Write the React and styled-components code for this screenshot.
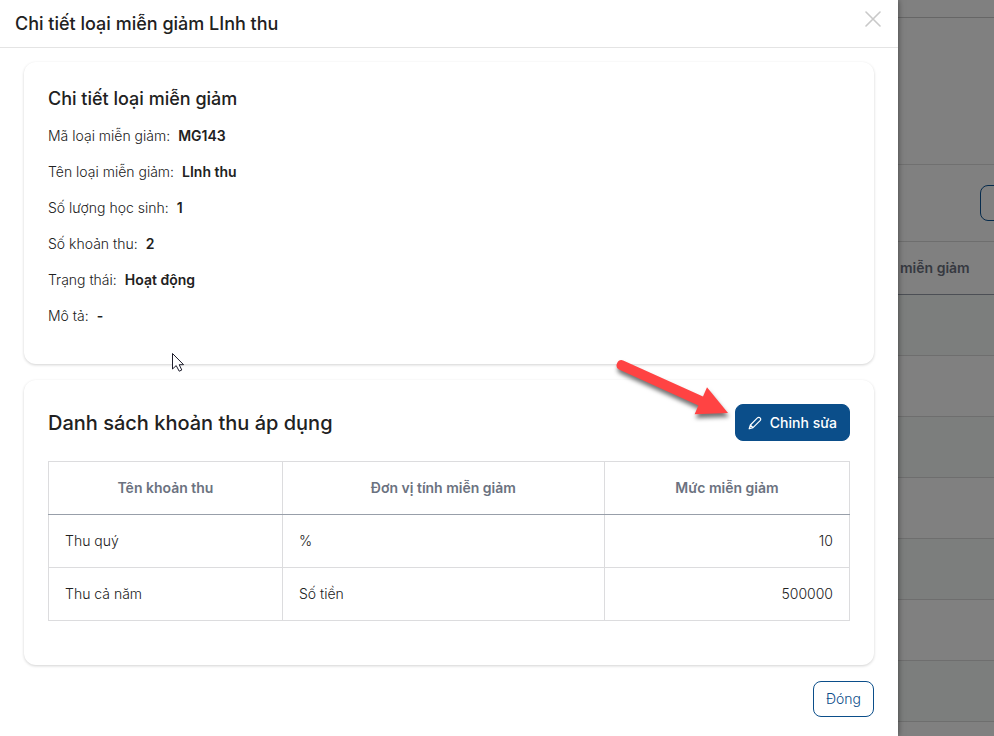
import React from "react";
import styled, { createGlobalStyle } from "styled-components";

const details = [
  { label: "Mã loại miễn giảm", value: "MG143" },
  { label: "Tên loại miễn giảm", value: "LInh thu" },
  { label: "Số lượng học sinh", value: "1" },
  { label: "Số khoản thu", value: "2" },
  { label: "Trạng thái", value: "Hoạt động" },
  { label: "Mô tả", value: "-" },
];

const fees = [
  { name: "Thu quý", unit: "%", amount: 10 },
  { name: "Thu cả năm", unit: "Số tiền", amount: 500000 },
];

const listRows = [1, 2, 3, 4, 5, 6, 7, 8];

function PencilIcon() {
  return (
    <svg width="14" height="14" viewBox="0 0 14 14" fill="none" aria-hidden="true">
      <path
        d="M1.2 12.8 2.4 9 9.4 1.9a1.8 1.8 0 0 1 2.7 0 1.8 1.8 0 0 1 0 2.7L5 11.6ZM2.4 9 5 11.6"
        stroke="currentColor"
        strokeWidth="1.2"
        strokeLinejoin="round"
      />
    </svg>
  );
}

function App() {
  return (
    <Layout>
      <GlobalStyle />
      <Drawer role="dialog" aria-labelledby="drawer-title">
        <DrawerHeader>
          <h1 id="drawer-title">Chi tiết loại miễn giảm LInh thu</h1>
          <CloseButton type="button" aria-label="Đóng cửa sổ">
            <svg width="16" height="16" viewBox="0 0 16 16">
              <path d="M1 1 15 15M15 1 1 15" stroke="currentColor" strokeWidth="1.6" strokeLinecap="round" />
            </svg>
          </CloseButton>
        </DrawerHeader>
        <DrawerBody>
          <Card $compact>
            <CardTitle>Chi tiết loại miễn giảm</CardTitle>
            <DetailList>
              {details.map((item) => (
                <DetailRow key={item.label}>
                  <dt>{item.label}:</dt>
                  <dd>{item.value}</dd>
                </DetailRow>
              ))}
            </DetailList>
            <Cursor width="14" height="21" viewBox="0 0 14 21" aria-hidden="true">
              <path
                d="M1.5 1.5V17L5.2 13.6 8.2 19.2 10.8 18 8.2 12.7H12.6Z"
                fill="#fff"
                stroke="#1d1d2b"
                strokeLinejoin="round"
              />
            </Cursor>
          </Card>
          <Card>
            <CardHeader>
              <CardTitle $large>Danh sách khoản thu áp dụng</CardTitle>
              <Button type="button" $primary>
                <PencilIcon />
                Chỉnh sửa
              </Button>
              <Arrow width="130" height="75" viewBox="0 0 130 75" aria-hidden="true">
                <path d="M13.2 8.4 93 44.5 97 35.2 118 61 84.6 62.2 88.4 53.6 9 17.6A5.1 5.1 0 0 1 13.2 8.4Z" />
              </Arrow>
            </CardHeader>
            <FeeTable>
              <colgroup>
                <col width="29.2%" />
                <col width="40.2%" />
                <col width="30.6%" />
              </colgroup>
              <thead>
                <tr>
                  <th>Tên khoản thu</th>
                  <th>Đơn vị tính miễn giảm</th>
                  <th>Mức miễn giảm</th>
                </tr>
              </thead>
              <tbody>
                {fees.map((fee) => (
                  <tr key={fee.name}>
                    <td>{fee.name}</td>
                    <td>{fee.unit}</td>
                    <td>{fee.amount}</td>
                  </tr>
                ))}
              </tbody>
            </FeeTable>
          </Card>
          <DrawerFooter>
            <Button type="button">Đóng</Button>
          </DrawerFooter>
        </DrawerBody>
      </Drawer>
      <Backdrop>
        <BackdropTop />
        <BackdropFilters />
        <BackdropToolbar>
          <BackdropButton type="button" aria-label="Thêm" />
        </BackdropToolbar>
        <BackdropHead>miễn giảm</BackdropHead>
        {listRows.map((row) => (
          <BackdropRow key={row} />
        ))}
      </Backdrop>
    </Layout>
  );
}

export default App;

const GlobalStyle = createGlobalStyle`
  * {
    box-sizing: border-box;
  }
  body {
    margin: 0;
    font-family: Inter, "Liberation Sans", sans-serif;
    font-size: 14px;
    line-height: 20px;
    font-weight: 300;
    color: #212121;
    background: #808080;
  }
  h1, h2, dl, dd {
    margin: 0;
  }
  button {
    font: inherit;
    cursor: pointer;
  }
`;

const Layout = styled.div`
  display: flex;
  height: 100vh;
  overflow: hidden;
`;

const Drawer = styled.section`
  flex: 1;
  min-width: 0;
  background: #fff;
  box-shadow: 0 0 6px rgba(0, 0, 0, 0.5);
  z-index: 1;
`;

const DrawerHeader = styled.header`
  display: flex;
  justify-content: space-between;
  height: 48px;
  padding: 0 17px 0 15px;
  border-bottom: 1px solid #e4e4e4;
  h1 {
    font-size: 18px;
    line-height: 47px;
    font-weight: 500;
  }
`;

const CloseButton = styled.button`
  display: flex;
  align-self: flex-start;
  margin-top: 11px;
  padding: 0;
  border: none;
  background: none;
  color: #c9c9c9;
`;

const DrawerBody = styled.div`
  display: flex;
  flex-direction: column;
  gap: 16px;
  padding: 14px 24px;
`;

const Card = styled.section`
  position: relative;
  padding: 24px 24px ${(props) => (props.$compact ? "38px" : "44px")};
  border-radius: 12px;
  background: #fff;
  box-shadow: 0 1px 3px rgba(0, 0, 0, 0.18);
`;

const CardTitle = styled.h2`
  font-size: ${(props) => (props.$large ? "20px" : "18px")};
  line-height: 26px;
  font-weight: 500;
`;

const DetailList = styled.dl`
  display: flex;
  flex-direction: column;
  gap: 16px;
  padding-top: 14px;
`;

const DetailRow = styled.div`
  display: flex;
  gap: 8px;
  dd {
    font-weight: 600;
  }
`;

const CardHeader = styled.div`
  position: relative;
  display: flex;
  align-items: center;
  justify-content: space-between;
  margin-bottom: 20px;
`;

const Button = styled.button`
  display: flex;
  align-items: center;
  gap: 8px;
  height: ${(props) => (props.$primary ? "37px" : "36px")};
  padding: 0 12px;
  border: 1px solid #0b4e8a;
  border-radius: 8px;
  background: ${(props) => (props.$primary ? "#0b4e8a" : "#fff")};
  color: ${(props) => (props.$primary ? "#fff" : "#0b4e8a")};
  font-weight: ${(props) => (props.$primary ? 500 : 300)};
`;

const Arrow = styled.svg`
  position: absolute;
  right: 110px;
  top: -52px;
  fill: #ff4343;
  filter: drop-shadow(1px 4px 2px rgba(0, 0, 0, 0.55));
`;

const Cursor = styled.svg`
  position: absolute;
  left: 147px;
  bottom: -9px;
  z-index: 1;
`;

const FeeTable = styled.table`
  width: 100%;
  table-layout: fixed;
  border-collapse: collapse;
  th,
  td {
    height: 53px;
    padding: 0 16px;
    border: 1px solid #dcdcde;
    text-align: left;
  }
  th {
    border-bottom-color: #989fa9;
    color: #6b7280;
    font-weight: 600;
    text-align: center;
  }
  td:last-child {
    text-align: right;
  }
`;

const DrawerFooter = styled.footer`
  display: flex;
  justify-content: flex-end;
`;

const Backdrop = styled.aside`
  flex: 0 0 96px;
  overflow: hidden;
  background: #808080;
`;

const BackdropTop = styled.div`
  height: 18px;
  border-bottom: 1px solid #666;
`;

const BackdropFilters = styled.div`
  height: 147px;
  border-bottom: 1px solid #707070;
`;

const BackdropToolbar = styled.div`
  display: flex;
  align-items: center;
  height: 77px;
  padding-left: 82px;
  border-bottom: 1px solid #6e6e6e;
`;

const BackdropButton = styled.button`
  flex: none;
  width: 96px;
  height: 36px;
  border: 1px solid #062b4c;
  border-radius: 8px;
  background: #808080;
`;

const BackdropHead = styled.div`
  height: 53px;
  padding-left: 2px;
  border-bottom: 1px solid #4c4f55;
  color: #363940;
  line-height: 52px;
  font-weight: 600;
  white-space: nowrap;
`;

const BackdropRow = styled.div`
  height: 61px;
  border-bottom: 1px solid #6e6e6e;
  background: #808080;
  &:nth-child(odd) {
    background: #7c7e7d;
  }
`;
